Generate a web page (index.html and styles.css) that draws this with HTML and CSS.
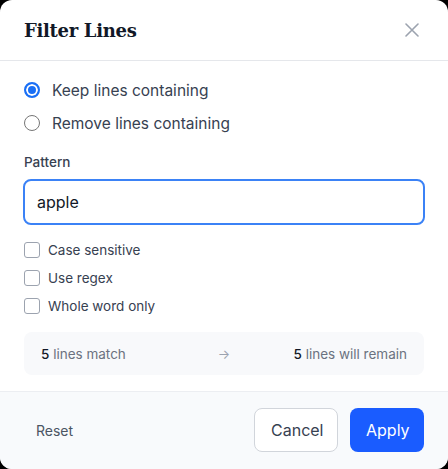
FILE: index.html
```html
<!DOCTYPE html>
<html>
<head>
<meta charset="utf-8">
<link rel="stylesheet" href="styles.css">
</head>
<body>
<div class="dialog">
  <header class="header">
    <h1 class="title">Filter Lines</h1>
    <button class="close" aria-label="Close">
      <svg width="14" height="14" viewBox="0 0 14 14"><path d="M1 1L13 13M13 1L1 13" stroke="#9ca3af" stroke-width="1.6" stroke-linecap="round"/></svg>
    </button>
  </header>
  <div class="content">
    <div class="radios">
      <label class="radio-row"><span class="radio checked"></span><span>Keep lines containing</span></label>
      <label class="radio-row"><span class="radio"></span><span>Remove lines containing</span></label>
    </div>
    <div class="field-label">Pattern</div>
    <div class="input">apple</div>
    <div class="checks">
      <label class="check-row"><span class="checkbox"></span><span>Case sensitive</span></label>
      <label class="check-row"><span class="checkbox"></span><span>Use regex</span></label>
      <label class="check-row"><span class="checkbox"></span><span>Whole word only</span></label>
    </div>
    <div class="summary">
      <span class="sum-left"><b>5</b> lines match</span>
      <span class="arrow">→</span>
      <span class="sum-right"><b>5</b> lines will remain</span>
    </div>
  </div>
  <footer class="footer">
    <button class="btn-reset">Reset</button>
    <div class="actions">
      <button class="btn btn-cancel">Cancel</button>
      <button class="btn btn-apply">Apply</button>
    </div>
  </footer>
</div>
</body>
</html>
```

FILE: styles.css
```css
* { box-sizing: border-box; }
html, body { margin: 0; padding: 0; background: #000; }
body { font-family: Inter, "Noto Sans", sans-serif; }
.dialog {
  width: 448px;
  height: 469px;
  background: #fff;
  border-radius: 12px;
  overflow: hidden;
  display: flex;
  flex-direction: column;
}
.header {
  height: 61px;
  border-bottom: 1px solid #e5e7eb;
  display: flex;
  align-items: center;
  justify-content: space-between;
  padding: 0 29px 0 24px;
  flex-shrink: 0;
}
.title {
  margin: 0;
  font-family: "DejaVu Serif", Georgia, serif;
  font-weight: 700;
  font-size: 18px;
  color: #111827;
  letter-spacing: -0.3px;
}
.close {
  border: 0;
  background: none;
  padding: 0;
  width: 14px;
  height: 14px;
  display: flex;
}
.content {
  padding: 17px 24px 16px;
  display: flex;
  flex-direction: column;
  flex: 1;
}
.radios { display: flex; flex-direction: column; gap: 9px; }
.radio-row {
  height: 24px;
  display: flex;
  align-items: center;
  gap: 12px;
  font-size: 15.5px;
  color: #374151;
}
.radio {
  width: 16px;
  height: 16px;
  border-radius: 50%;
  border: 1px solid #767676;
  flex-shrink: 0;
}
.radio.checked {
  border: 2px solid #1a6ff5;
  background: #1a6ff5;
  box-shadow: inset 0 0 0 2px #fff;
}
.field-label {
  margin-top: 18px;
  height: 18px;
  line-height: 18px;
  font-size: 13.5px;
  color: #374151;
  font-weight: 500;
}
.input {
  margin-top: 8px;
  height: 46px;
  border: 2px solid #3b82f6;
  border-radius: 8px;
  padding: 0 12px;
  display: flex;
  align-items: center;
  font-size: 16px;
  color: #111827;
  margin-right: -1px;
  margin-left: -1px;
}
.checks { margin-top: 15px; display: flex; flex-direction: column; gap: 8px; }
.check-row {
  height: 20px;
  display: flex;
  align-items: center;
  gap: 8px;
  font-size: 13.5px;
  color: #374151;
}
.checkbox {
  width: 16px;
  height: 16px;
  border: 1px solid #9ca3af;
  border-radius: 3px;
  flex-shrink: 0;
}
.summary {
  margin-top: 16px;
  height: 43px;
  background: #f8f9fb;
  border-radius: 8px;
  padding: 0 17px;
  display: flex;
  align-items: center;
  justify-content: space-between;
  font-size: 13.5px;
  color: #6b7280;
}
.summary b { font-weight: 500; color: #111827; }
.sum-left { width: 150px; }
.sum-right { width: 150px; text-align: right; }
.arrow { color: #9ca3af; font-size: 13px; }
.footer {
  height: 78px;
  border-top: 1px solid #eceef2;
  background: #f8fafc;
  display: flex;
  align-items: center;
  justify-content: space-between;
  padding: 0 24px 1px;
  flex-shrink: 0;
}
.btn-reset {
  border: 0;
  background: none;
  font-family: inherit;
  font-size: 14px;
  color: #4b5563;
  padding: 0 12px;
  height: 44px;
}
.actions { display: flex; gap: 12px; }
.btn {
  height: 44px;
  border-radius: 8px;
  font-family: inherit;
  font-size: 16px;
  padding: 0 16px;
}
.btn-cancel {
  width: 84px;
  background: #fff;
  border: 1px solid #d1d5db;
  color: #374151;
}
.btn-apply {
  width: 74px;
  background: #1a5cff;
  border: 0;
  color: #fff;
}
```
